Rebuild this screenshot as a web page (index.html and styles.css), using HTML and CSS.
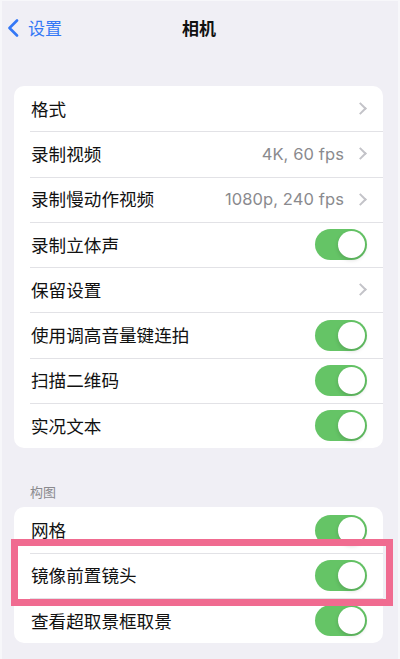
FILE: index.html
```html
<!DOCTYPE html>
<html lang="zh-CN">
<head>
<meta charset="utf-8">
<title>相机</title>
<link rel="stylesheet" href="styles.css">
</head>
<body>
<div class="page">
  <header class="nav">
    <div class="back">
      <svg class="back-icon" width="12" height="18" viewBox="0 0 12 18"><path d="M10 1.5 L2.5 9 L10 16.5" fill="none" stroke="#3478f6" stroke-width="2.6" stroke-linecap="round" stroke-linejoin="round"/></svg>
      <span class="back-label">设置</span>
    </div>
    <div class="title">相机</div>
  </header>

  <section class="card first">
    <div class="row"><span class="label">格式</span><span class="right"><span class="chev"></span></span></div>
    <div class="row"><span class="label">录制视频</span><span class="right"><span class="value">4K, 60 fps</span><span class="chev"></span></span></div>
    <div class="row"><span class="label">录制慢动作视频</span><span class="right"><span class="value">1080p, 240 fps</span><span class="chev"></span></span></div>
    <div class="row"><span class="label">录制立体声</span><span class="toggle"><span class="knob"></span></span></div>
    <div class="row"><span class="label">保留设置</span><span class="right"><span class="chev"></span></span></div>
    <div class="row"><span class="label">使用调高音量键连拍</span><span class="toggle"><span class="knob"></span></span></div>
    <div class="row"><span class="label">扫描二维码</span><span class="toggle"><span class="knob"></span></span></div>
    <div class="row"><span class="label">实况文本</span><span class="toggle"><span class="knob"></span></span></div>
  </section>

  <div class="section-header">构图</div>

  <section class="card">
    <div class="row"><span class="label">网格</span><span class="toggle"><span class="knob"></span></span></div>
    <div class="row"><span class="label">镜像前置镜头</span><span class="toggle"><span class="knob"></span></span></div>
    <div class="row"><span class="label">查看超取景框取景</span><span class="toggle"><span class="knob"></span></span></div>
  </section>

  <div class="highlight"></div>
</div>
</body>
</html>
```

FILE: styles.css
```css
* { box-sizing: border-box; }

html, body {
  margin: 0;
  padding: 0;
}

body {
  background: #f0eff5;
  font-family: "Noto Sans CJK SC", "Inter", "Noto Sans", sans-serif;
  color: #111;
}

.page {
  position: relative;
  width: 400px;
  height: 659px;
  overflow: hidden;
  border-left: 2px solid #f7f7fa;
  border-top: 1px solid #f7f7fa;
  border-right: 2px solid #f7f7fa;
}

.nav {
  position: relative;
  height: 53px;
  display: flex;
  align-items: center;
  justify-content: center;
}

.back {
  position: absolute;
  left: 5px;
  top: 17px;
  display: flex;
  align-items: center;
  gap: 9px;
}

.back-icon { display: block; }

.back-label {
  font-size: 17px;
  color: #3478f6;
  line-height: 20px;
}

.title {
  font-size: 17px;
  font-weight: 700;
  line-height: 20px;
  margin-left: -2px;
}

.card {
  margin: 0 15px 0 12px;
  background: #fff;
  border-radius: 10px;
  overflow: hidden;
}

.card.first { margin-top: 32px; }

.row {
  position: relative;
  height: 45.3px;
  display: flex;
  align-items: center;
  justify-content: space-between;
  padding: 0 16px 0 17px;
}

.row + .row::before {
  content: "";
  position: absolute;
  left: 16px;
  right: 0;
  top: 0;
  height: 1px;
  background: #e2e2e6;
}

.label {
  font-size: 17.6px;
  line-height: 22px;
  color: #111;
}

.right {
  display: flex;
  align-items: center;
  gap: 12px;
}

.value {
  font-family: "Inter", "Noto Sans", sans-serif;
  font-size: 16.5px;
  color: #8a8a8e;
  letter-spacing: 0.1px;
}

.chev {
  width: 9px;
  height: 9px;
  border-top: 2px solid #c3c3c8;
  border-right: 2px solid #c3c3c8;
  transform: rotate(45deg);
  margin-right: 2px;
}

.toggle {
  position: relative;
  width: 52px;
  height: 31px;
  border-radius: 16px;
  background: #65c466;
}

.knob {
  position: absolute;
  right: 2px;
  top: 2px;
  width: 27px;
  height: 27px;
  border-radius: 50%;
  background: #fff;
  box-shadow: 0 2px 4px rgba(0,0,0,0.15);
}

.section-header {
  padding: 35px 0 7px 28px;
  font-size: 13px;
  line-height: 17px;
  color: #8a8a8e;
}

.highlight {
  position: absolute;
  left: 9px;
  top: 538px;
  width: 382px;
  height: 67px;
  border: 7.5px solid #f06b90;
}
```
